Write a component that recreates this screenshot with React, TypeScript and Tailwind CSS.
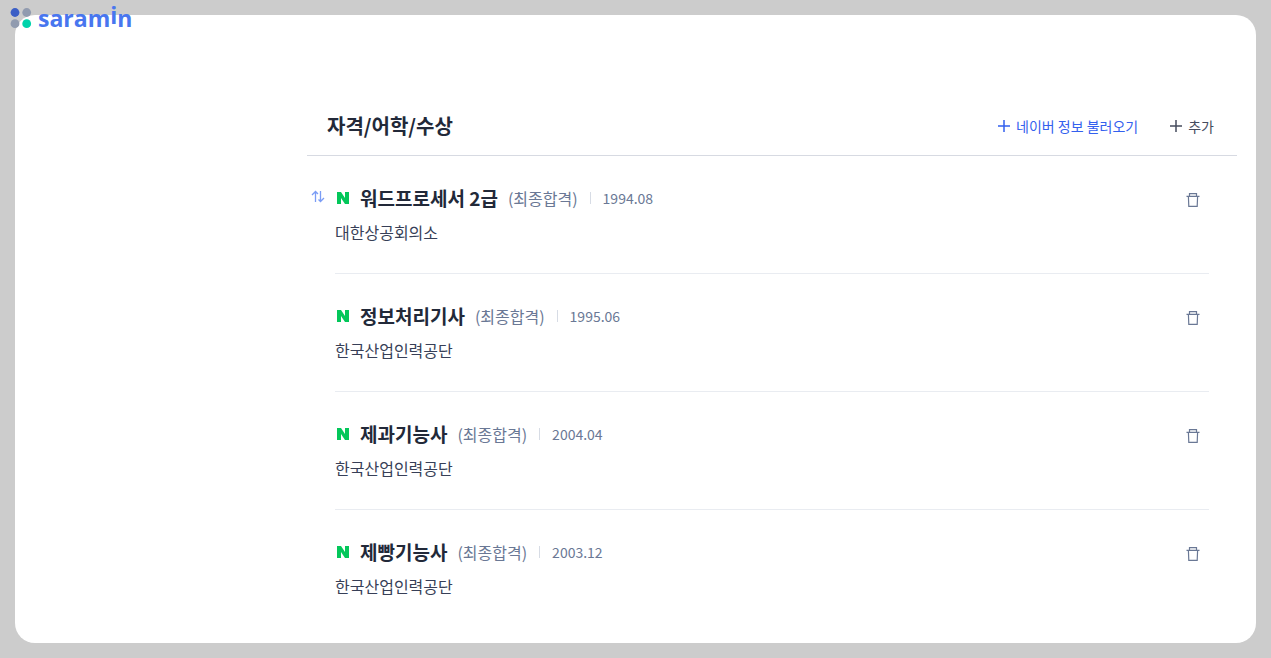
const items = [
  { title: "워드프로세서 2급", date: "1994.08", org: "대한상공회의소" },
  { title: "정보처리기사", date: "1995.06", org: "한국산업인력공단" },
  { title: "제과기능사", date: "2004.04", org: "한국산업인력공단" },
  { title: "제빵기능사", date: "2003.12", org: "한국산업인력공단" },
];

function Logo() {
  return (
    <a href="#" className="absolute left-[10px] top-0 flex h-9 items-center gap-[6px]">
      <svg width="22" height="22" viewBox="0 0 22 22" aria-hidden="true">
        <circle cx="5" cy="5.5" r="4.4" fill="#3c5fc6" />
        <circle cx="16.7" cy="5.5" r="4.4" fill="#919baf" />
        <circle cx="5" cy="16.7" r="4.4" fill="#919baf" />
        <circle cx="16.7" cy="16.7" r="4.4" fill="#00d3ab" />
      </svg>
      <span className="font-['Open_Sans',sans-serif] text-[23px] font-bold leading-9 text-[#4876ef]">
        saram<span className="align-[3px] leading-none">i</span>n
      </span>
    </a>
  );
}

function PlusIcon() {
  return (
    <svg width="12" height="12" viewBox="0 0 12 12" aria-hidden="true">
      <path d="M6 0v12M0 6h12" stroke="currentColor" strokeWidth="1.5" fill="none" />
    </svg>
  );
}

function SortIcon() {
  return (
    <svg width="14" height="14" viewBox="0 0 14 14" fill="none" stroke="#7b9df5" strokeWidth="1.3" aria-hidden="true">
      <path d="M4.5 12V1.5M1 5l3.5-3.5L7 4M9.5 1v10.5M7.5 9.5l2 2L13 8" />
    </svg>
  );
}

function NaverIcon() {
  return (
    <svg width="12" height="12" viewBox="0 0 12 12" className="shrink-0" aria-hidden="true">
      <path d="M0 0h4l4 6V0h4v12H8L4 6v6H0z" fill="#03c75a" />
    </svg>
  );
}

function TrashIcon() {
  return (
    <svg width="14" height="14" viewBox="0 0 14 14" fill="none" stroke="#6a7895" strokeWidth="1.2" aria-hidden="true">
      <path d="M0.5 3.3h13M3.5 3.3V0.7h7v2.6M2.4 3.3l.4 10h8.4l.4-10" />
    </svg>
  );
}

function App() {
  return (
    <div className="relative flex min-h-screen bg-[#cccccc] p-[15px] font-['Noto_Sans_CJK_KR',sans-serif] text-[#222939]">
      <Logo />
      <main className="flex-1 rounded-[20px] bg-white pb-[15px] pl-[292px] pr-[19px] pt-[85px]">
        <header className="flex h-14 items-center justify-between border-b border-[#d7dae2] pb-1 pl-5 pr-[23px]">
          <h2 className="text-[20px] font-bold">자격/어학/수상</h2>
          <div className="flex gap-8 text-sm">
            <button type="button" className="flex items-center gap-[6px] text-[#3360ee]">
              <PlusIcon />
              네이버 정보 불러오기
            </button>
            <button type="button" className="flex items-center gap-[6px] text-[#464c5e]">
              <PlusIcon />
              추가
            </button>
          </div>
        </header>

        <ul className="pr-7">
          {items.map((item, index) => (
            <li key={item.title} className="flex">
              <div className="w-7 shrink-0 pl-1 pt-[34px]">
                {index === 0 && (
                  <button type="button" aria-label="순서 변경" className="block">
                    <SortIcon />
                  </button>
                )}
              </div>
              <div
                className={
                  index < items.length - 1
                    ? "flex h-[118px] flex-1 items-start justify-between border-b border-[#e9ecf1] pt-[26px]"
                    : "flex h-[118px] flex-1 items-start justify-between pt-[26px]"
                }
              >
                <div>
                  <div className="flex h-8 items-center pl-[2px]">
                    <NaverIcon />
                    <h3 className="ml-[11px] text-[19px] font-bold">{item.title}</h3>
                    <span className="ml-[10px] text-base text-[#6a7895]">(최종합격)</span>
                    <span className="mx-3 h-3 w-px bg-[#d7dce5]" />
                    <span className="text-sm text-[#6a7895]">{item.date}</span>
                  </div>
                  <p className="mt-1 text-base leading-7 text-[#373f57]">{item.org}</p>
                </div>
                <button type="button" aria-label="삭제" className="mr-[9px] flex h-9 items-center">
                  <TrashIcon />
                </button>
              </div>
            </li>
          ))}
        </ul>
      </main>
    </div>
  );
}

export default App;
